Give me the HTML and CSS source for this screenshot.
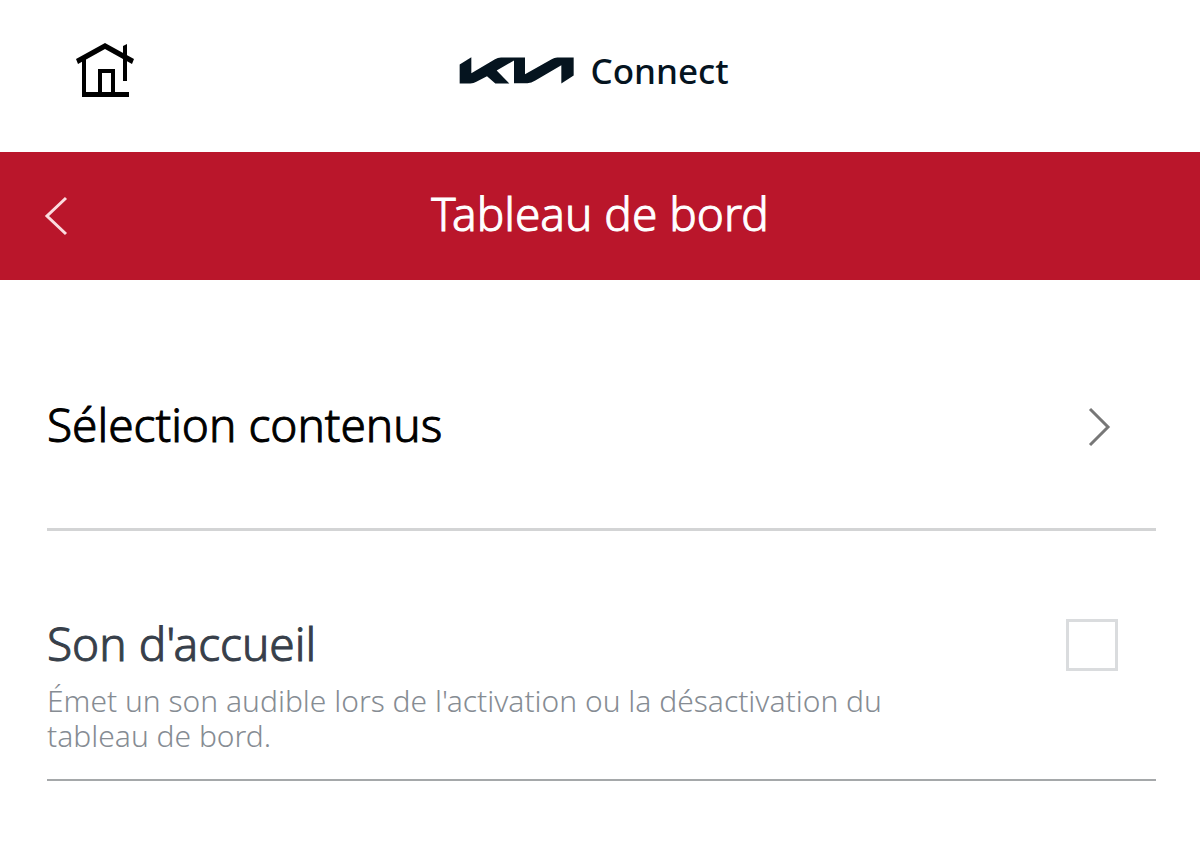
FILE: index.html
```html
<!DOCTYPE html>
<html lang="fr">
  <head>
    <meta charset="utf-8" />
    <meta name="viewport" content="width=device-width, initial-scale=1" />
    <title>Kia Connect</title>
    <link rel="stylesheet" href="styles.css">
  </head>
  <body>
    <header class="header">
      <a class="home" href="#" aria-label="Accueil">
        <svg width="58" height="56" viewBox="0 0 58 56">
          <path d="M29 1 58 17l-2 5L29 7 2 22l-2-5z" />
          <path d="M6 17h4v33h12V27h17v23h14v5H6zm20 14v19h9V31z" fill-rule="evenodd" />
          <path d="m47 4 4-2v37h-4z" />
        </svg>
      </a>
      <div class="brand">
        <svg class="logo" width="115" height="27" viewBox="0 0 345 80" fill="#05141f" role="img" aria-label="Kia">
          <path d="M2 22 37 0v48L108 6q8-5 18-5h72v50l80-45q8-5 17-5h49v54l-37 24V24l-78 46q-12 8-24 8h-40V10l-52 30 38 39h-42L84 57 52 74q-8 5-18 5H2z" />
        </svg>
        <span class="brand-name">Connect</span>
      </div>
    </header>

    <div class="title-bar">
      <button class="back" type="button" aria-label="Retour">
        <svg width="24" height="40" viewBox="0 0 24 40" fill="none" stroke="#fbdcdf" stroke-width="3">
          <path d="M22 2 3 20l19 18" />
        </svg>
      </button>
      <h1>Tableau de bord</h1>
    </div>

    <main class="settings">
      <a class="row row-link" href="#">
        <span class="row-title">Sélection contenus</span>
        <svg class="chevron" width="24" height="40" viewBox="0 0 24 40" fill="none" stroke="#777" stroke-width="3">
          <path d="m2 2 18 18L2 38" />
        </svg>
      </a>
      <div class="row row-option">
        <label for="welcomeSound">
          <span class="row-title">Son d'accueil</span>
          <span class="row-text">Émet un son audible lors de l'activation ou la désactivation du tableau de bord.</span>
        </label>
        <input type="checkbox" id="welcomeSound" class="checkbox" />
      </div>
    </main>
  </body>
</html>
```

FILE: styles.css
```css
* {
  box-sizing: border-box;
}

body {
  margin: 0;
  background-color: #fff;
  color: #000;
  font-family: 'Noto Sans', 'Open Sans', sans-serif;
}

.header {
  display: grid;
  grid-template-columns: 1fr auto 1fr;
  align-items: center;
  padding: 40px 76px 52px;
}

.home {
  display: flex;
  height: 60px;
  align-items: center;
}

.brand {
  display: flex;
  align-items: center;
  gap: 16px;
  padding-right: 12px;
}

.brand-name {
  padding-top: 2px;
  color: #05141f;
  font-size: 35px;
  line-height: 40px;
  font-weight: 500;
}

.title-bar {
  display: grid;
  grid-template-columns: 1fr auto 1fr;
  align-items: center;
  height: 128px;
  padding: 0 44px;
  background-color: #ba162b;
  color: #fff;
}

/* light weight, thickened a little by the stroke */
.title-bar h1,
.row-title {
  font-size: 46px;
  line-height: 56px;
  font-weight: 300;
  -webkit-text-stroke: 1px currentColor;
}

.title-bar h1 {
  margin: 0;
  padding-bottom: 6px;
}

.back {
  display: flex;
  justify-self: start;
  padding: 0;
  border: none;
  background: none;
  cursor: pointer;
}

.settings {
  padding: 0 44px 0 47px;
}

.row {
  display: flex;
  justify-content: space-between;
  border-bottom: 3px solid #d3d4d5;
}

.row-link {
  align-items: center;
  padding: 116px 44px 76px 0;
  color: #000;
  text-decoration: none;
}

.chevron {
  margin-top: 6px;
}

.row-title {
  display: block;
}

.row-option {
  align-items: flex-start;
  padding: 84px 38px 26px 0;
  border-bottom: 2px solid #a5a8aa;
}

.row-option .row-title {
  color: #373f4a;
}

.row-text {
  display: block;
  max-width: 860px;
  margin-top: 12px;
  color: #868c93;
  font-size: 30px;
  line-height: 35px;
  font-weight: 300;
}

.checkbox {
  appearance: none;
  flex: none;
  width: 52px;
  height: 52px;
  margin: 4px 0 0;
  border: 3px solid #dadcde;
  background-color: #fff;
}
```
